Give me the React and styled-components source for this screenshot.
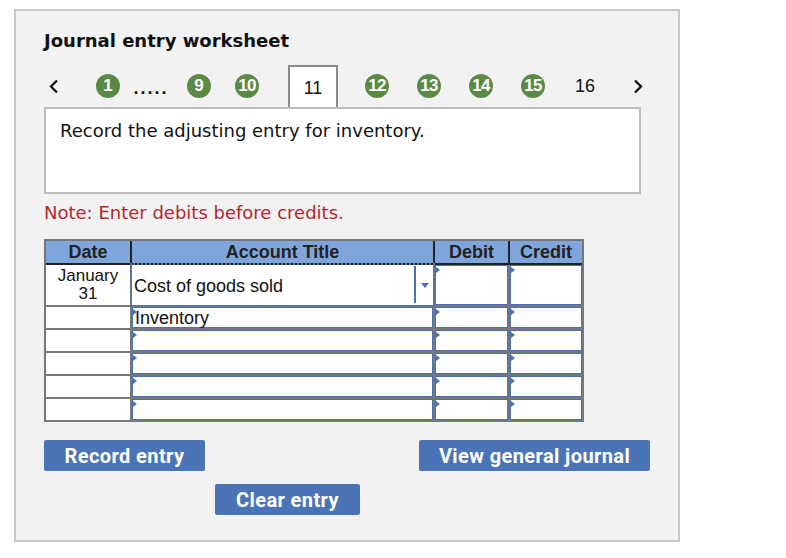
import React from "react";
import styled, { createGlobalStyle } from "styled-components";

const GlobalStyle = createGlobalStyle`
  html, body {
    margin: 0;
    padding: 0;
    background: #ffffff;
  }
  body {
    font-family: "Liberation Sans", Arial, sans-serif;
    color: #111;
  }
`;

const Page = styled.div`
  padding: 9px 0 0 14px;
`;

const Panel = styled.div`
  box-sizing: border-box;
  width: 666px;
  height: 533px;
  border: 2px solid #c8c8c8;
  background: #f2f2f2;
  padding: 19px 28px 0 28px;
`;

const Title = styled.h1`
  margin: 0;
  font-family: "DejaVu Sans", Verdana, sans-serif;
  font-size: 18px;
  line-height: 22px;
  font-weight: 700;
  color: #111;
`;

const NavRow = styled.div`
  display: flex;
  align-items: center;
  height: 42px;
  margin-top: 13px;
`;

const Slot = styled.div`
  flex-shrink: 0;
  width: ${(p) => p.$w}px;
  margin-left: ${(p) => p.$ml || 0}px;
  display: flex;
  align-items: center;
  justify-content: center;
  font-size: 18px;
  color: #111;
`;

const Circle = styled.span`
  width: 24px;
  height: 24px;
  border-radius: 50%;
  background: #5b8a47;
  color: #fff;
  font-weight: 700;
  font-size: 17px;
  letter-spacing: ${(p) => (p.$wide ? "-0.8px" : "0")};
  display: flex;
  align-items: center;
  justify-content: center;
`;

const Dots = styled.span`
  font-weight: 700;
  font-size: 18px;
  letter-spacing: 2px;
  position: relative;
  top: 2px;
`;

const CurrentTab = styled.div`
  box-sizing: border-box;
  flex-shrink: 0;
  align-self: stretch;
  width: 50px;
  margin-left: ${(p) => p.$ml}px;
  border: 2px solid #8a8a8a;
  border-bottom: none;
  background: #fff;
  display: flex;
  align-items: center;
  justify-content: center;
  font-size: 18px;
  padding-top: 2px;
`;

const Prompt = styled.div`
  box-sizing: border-box;
  width: 597px;
  height: 87px;
  border: 2px solid #bdbdbd;
  background: #fff;
  padding: 11px 14px;
  font-family: "DejaVu Sans", Verdana, sans-serif;
  font-size: 18px;
  line-height: 22px;
  color: #111;
`;

const Note = styled.p`
  margin: 8px 0 0;
  font-family: "DejaVu Sans", Verdana, sans-serif;
  font-size: 18px;
  line-height: 22px;
  color: #b3272d;
`;

const Table = styled.div`
  box-sizing: border-box;
  width: 540px;
  margin-top: 15px;
  border: 2px solid #777;
`;

const cols = "84px 301px 73px 72px";

const Head = styled.div`
  display: grid;
  grid-template-columns: ${cols};
  column-gap: 2px;
  background: #222;
  border-bottom: 2px solid #222;
`;

const HeadCell = styled.div`
  background: #7ea6dd;
  height: 22px;
  line-height: 22px;
  text-align: center;
  font-weight: 700;
  font-size: 18px;
  color: #222;
`;

const Body = styled.div`
  display: grid;
  grid-template-columns: ${cols};
  grid-auto-rows: 21px;
  grid-template-rows: 40px;
  gap: 2px;
  background: #777;
`;

const DateCell = styled.div`
  background: #fff;
  text-align: center;
  font-size: 17px;
  line-height: 18px;
  padding-top: 2px;
`;

const EntryCell = styled.div`
  position: relative;
  box-sizing: border-box;
  background: #fff;
  border: 1px solid #4a72b0;
  font-size: 18px;
  line-height: 19px;
  padding-left: 2px;
  padding-top: 1px;
  white-space: nowrap;

  &::before {
    content: "";
    position: absolute;
    left: 0;
    top: 1px;
    border-style: solid;
    border-width: 3px 0 3px 4px;
    border-color: transparent transparent transparent #4a72b0;
  }
`;

const SelectCell = styled.div`
  background: #fff;
  outline: 2px dotted #4a72b0;
  display: flex;
  align-items: stretch;
  font-size: 18px;
`;

const SelectText = styled.span`
  flex: 1;
  display: flex;
  align-items: center;
  padding-left: 2px;
  padding-top: 2px;
`;

const SelectBar = styled.span`
  width: 2px;
  margin: 1px 0 2px;
  background: #4a72b0;
`;

const SelectArrow = styled.span`
  width: 17px;
  display: flex;
  align-items: center;
  justify-content: center;
`;

const ButtonRow = styled.div`
  display: flex;
  justify-content: ${(p) => p.$justify || "flex-start"};
  margin-top: ${(p) => p.$mt}px;
  padding-left: ${(p) => p.$pl || 0}px;
`;

const Button = styled.button`
  box-sizing: border-box;
  width: ${(p) => p.$w}px;
  height: 31px;
  border: none;
  border-radius: 2px;
  background: #4a74b5;
  color: #fff;
  font-family: Roboto, "Liberation Sans", Arial, sans-serif;
  font-weight: 700;
  font-size: 20px;
  letter-spacing: 0.4px;
  padding: 0;
  cursor: pointer;
`;

const Chevron = ({ dir }) => (
  <svg width="10" height="15" viewBox="0 0 10 15">
    <polyline
      points={dir === "left" ? "8,1.5 2,7.5 8,13.5" : "2,1.5 8,7.5 2,13.5"}
      fill="none"
      stroke="#111"
      strokeWidth="2.2"
    />
  </svg>
);

const emptyRows = [0, 1, 2, 3];

export default function App() {
  return (
    <>
      <GlobalStyle />
      <Page>
        <Panel>
          <Title>Journal entry worksheet</Title>
          <NavRow>
            <Slot $w={20}>
              <Chevron dir="left" />
            </Slot>
            <Slot $w={52} $ml={18}>
              <Circle>1</Circle>
            </Slot>
            <Slot $w={34}>
              <Dots>.....</Dots>
            </Slot>
            <Slot $w={48} $ml={7}>
              <Circle>9</Circle>
            </Slot>
            <Slot $w={48}>
              <Circle $wide>10</Circle>
            </Slot>
            <CurrentTab $ml={17}>11</CurrentTab>
            <Slot $w={52} $ml={13}>
              <Circle $wide>12</Circle>
            </Slot>
            <Slot $w={52}>
              <Circle $wide>13</Circle>
            </Slot>
            <Slot $w={52}>
              <Circle $wide>14</Circle>
            </Slot>
            <Slot $w={52}>
              <Circle $wide>15</Circle>
            </Slot>
            <Slot $w={52}>16</Slot>
            <Slot $w={54}>
              <Chevron dir="right" />
            </Slot>
          </NavRow>

          <Prompt>Record the adjusting entry for inventory.</Prompt>
          <Note>Note: Enter debits before credits.</Note>

          <Table>
            <Head>
              <HeadCell>Date</HeadCell>
              <HeadCell>Account Title</HeadCell>
              <HeadCell>Debit</HeadCell>
              <HeadCell>Credit</HeadCell>
            </Head>
            <Body>
              <DateCell>
                January
                <br />
                31
              </DateCell>
              <SelectCell>
                <SelectText>Cost of goods sold</SelectText>
                <SelectBar />
                <SelectArrow>
                  <svg width="8" height="5" viewBox="0 0 8 5">
                    <polygon points="0,0 8,0 4,5" fill="#4a72b0" />
                  </svg>
                </SelectArrow>
              </SelectCell>
              <EntryCell />
              <EntryCell />

              <DateCell />
              <EntryCell>Inventory</EntryCell>
              <EntryCell />
              <EntryCell />

              {emptyRows.map((r) => (
                <React.Fragment key={r}>
                  <DateCell />
                  <EntryCell />
                  <EntryCell />
                  <EntryCell />
                </React.Fragment>
              ))}
            </Body>
          </Table>

          <ButtonRow $justify="space-between" $mt={18}>
            <Button $w={161}>Record entry</Button>
            <Button $w={231}>View general journal</Button>
          </ButtonRow>
          <ButtonRow $mt={13} $pl={171}>
            <Button $w={145}>Clear entry</Button>
          </ButtonRow>
        </Panel>
      </Page>
    </>
  );
}
